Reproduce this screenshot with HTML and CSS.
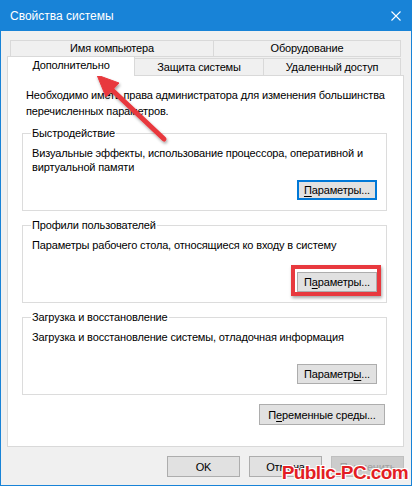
FILE: index.html
```html
<!DOCTYPE html>
<html lang="ru">

<head>
    <meta charset="utf-8">
    <meta name="viewport" content="width=device-width, initial-scale=1.0">
    <title>Свойства системы</title>
    <link rel="stylesheet" href="styles.css">
</head>

<body>
    <div class="window">
        <header class="titlebar">
            <span class="title">Свойства системы</span>
            <svg class="close" width="10" height="10" viewBox="0 0 10 10">
                <path d="M0.5 0.5 L9.5 9.5 M9.5 0.5 L0.5 9.5" stroke="#fff" stroke-width="1.1" fill="none" />
            </svg>
        </header>

        <div class="content">
            <nav class="tabs">
                <div class="tab-row row-top">
                    <span class="tab wide-a">Имя компьютера</span>
                    <span class="tab wide-b">Оборудование</span>
                </div>
                <div class="tab-row row-bottom">
                    <span class="tab active">Дополнительно</span>
                    <span class="tab t-protect">Защита системы</span>
                    <span class="tab t-remote">Удаленный доступ</span>
                </div>
            </nav>

            <section class="panel">
                <p class="intro">Необходимо иметь права администратора для изменения большинства перечисленных параметров.</p>

                <fieldset class="group">
                    <legend>Быстродействие</legend>
                    <p>Визуальные эффекты, использование процессора, оперативной и виртуальной памяти</p>
                    <div class="btn-line">
                        <button class="btn focused"><u>П</u>араметры...</button>
                    </div>
                </fieldset>

                <fieldset class="group">
                    <legend>Профили пользователей</legend>
                    <p>Параметры рабочего стола, относящиеся ко входу в систему</p>
                    <div class="btn-line">
                        <span class="mark"><button class="btn">П<u>а</u>раметры...</button></span>
                    </div>
                </fieldset>

                <fieldset class="group">
                    <legend>Загрузка и восстановление</legend>
                    <p>Загрузка и восстановление системы, отладочная информация</p>
                    <div class="btn-line">
                        <button class="btn">Параметр<u>ы</u>...</button>
                    </div>
                </fieldset>

                <div class="btn-line env">
                    <button class="btn env-btn">П<u>е</u>ременные среды...</button>
                </div>
            </section>

            <footer class="dialog-buttons">
                <button class="btn wide">OK</button>
                <button class="btn wide">Отмена</button>
                <button class="btn wide" disabled>Применить</button>
            </footer>
        </div>

        <!-- annotation arrow -->
        <svg class="arrow" width="412" height="486" viewBox="0 0 412 486">
            <defs>
                <filter id="sh" x="-20%" y="-20%" width="140%" height="140%">
                    <feDropShadow dx="1" dy="2" stdDeviation="1.5" flood-color="#000" flood-opacity="0.35" />
                </filter>
            </defs>
            <g filter="url(#sh)" fill="#e8393e" stroke="#e8393e">
                <line x1="164" y1="139" x2="110" y2="88" stroke-width="5" stroke-linecap="round" />
                <polygon points="97,75 119,83 106,97" stroke-width="1" stroke-linejoin="round" />
            </g>
        </svg>

        <div class="watermark">Public-PC.com</div>
    </div>
</body>

</html>
```

FILE: styles.css
```css
* {
    box-sizing: border-box;
}

body {
    margin: 0;
    font-family: "Liberation Sans", Arial, sans-serif;
    font-size: 11px;
    letter-spacing: -0.15px;
    color: #000;
    background: #fff;
}

.window {
    position: relative;
    width: 412px;
    height: 486px;
    border: 1px solid #1883d7;
    border-top: none;
    background: #f0f0f0;
    overflow: hidden;
}

.titlebar {
    height: 31px;
    margin: 0 -1px;
    background: #1883d7;
    color: #fff;
    display: flex;
    align-items: center;
    justify-content: space-between;
    padding: 0 11px 0 10px;
}

.title {
    font-size: 12px;
    letter-spacing: 0;
}

.close {
    display: block;
}

/* tabs */

.tabs {
    padding-top: 9px;
}

.tab-row {
    display: flex;
}

.row-top {
    margin-left: 9px;
}

.row-bottom {
    margin-left: 6px;
    margin-top: -1px;
    align-items: flex-end;
}

.tab {
    display: flex;
    align-items: center;
    justify-content: center;
    background: #f0f0f0;
    border: 1px solid #d9d9d9;
    line-height: 15px;
    white-space: nowrap;
}

.row-top .tab {
    height: 17px;
}

.wide-a {
    width: 204px;
}

.wide-b {
    width: 187px;
    border-left: none;
}

.row-bottom .tab {
    height: 17px;
    border-bottom: none;
}

.tab.active {
    position: relative;
    z-index: 1;
    width: 128px;
    height: 20px;
    margin-bottom: -1px;
    background: #fff;
    padding-bottom: 3px;
}

.t-protect {
    width: 129px;
    border-left: none;
}

.t-remote {
    width: 137px;
    border-left: none;
}

/* panel */

.panel {
    margin-left: 6px;
    width: 397px;
    height: 372px;
    background: #fff;
    border: 1px solid #d9d9d9;
    padding-top: 12px;
}

.intro {
    margin: 0 12px 7px 18px;
    line-height: 15.5px;
}

.group {
    margin: 0 16px 7px 14px;
    padding: 0 9px 10px 9px;
    border: 1px solid #dcdcdc;
    min-width: 0;
}

.group legend {
    padding: 0 1px;
    margin-left: -1px;
    line-height: 15px;
}

.group p {
    margin: 5px 0 0 0;
    line-height: 14px;
    min-height: 28px;
}

.btn-line {
    display: flex;
    justify-content: flex-end;
    margin-top: 6px;
}

.btn {
    font-family: inherit;
    font-size: 11px;
    letter-spacing: -0.15px;
    color: #000;
    height: 20px;
    width: 80px;
    padding: 0;
    background: #e1e1e1;
    border: 1px solid #adadad;
    line-height: 16px;
}

.btn u {
    text-underline-offset: 2px;
}

.btn.focused {
    border-color: #0078d7;
    box-shadow: inset 0 0 0 1px #0078d7;
}

.mark {
    position: relative;
    display: block;
}

.mark::after {
    content: "";
    position: absolute;
    left: -6px;
    top: -7px;
    right: -4px;
    bottom: -4px;
    border: 4px solid #e8393e;
    box-shadow: 1px 2px 3px rgba(0, 0, 0, 0.35);
}

.env {
    margin-top: 9px;
    margin-right: 18px;
}

.env-btn {
    width: 126px;
    height: 21px;
}

.dialog-buttons {
    display: flex;
    justify-content: flex-end;
    gap: 9px;
    margin-top: 9px;
    padding-right: 7px;
}

.btn.wide {
    width: 73px;
    height: 21px;
}

.btn:disabled {
    color: #a0a0a0;
    background: #cccccc;
    border-color: #bfbfbf;
}

/* overlays */

.arrow {
    position: absolute;
    left: -1px;
    top: 0;
    pointer-events: none;
}

.watermark {
    position: absolute;
    right: 3px;
    bottom: 1px;
    font-family: "Liberation Sans", sans-serif;
    font-weight: bold;
    font-size: 19px;
    letter-spacing: -0.6px;
    color: #e31e24;
    text-shadow: -1px -1px 0 #fff, 1px -1px 0 #fff, -1px 1px 0 #fff, 1px 1px 0 #fff;
}
```
